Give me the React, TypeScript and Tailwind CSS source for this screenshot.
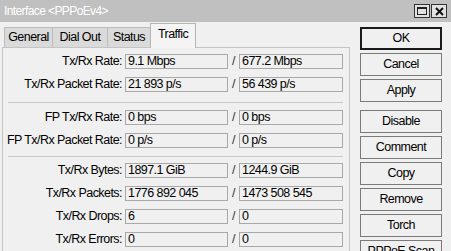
import React from 'react';

const font = { fontFamily: '"Liberation Sans", Arial, sans-serif' };

type Row = { label: string; tx: string; rx: string };

const groups: Row[][] = [
  [
    { label: 'Tx/Rx Rate:', tx: '9.1 Mbps', rx: '677.2 Mbps' },
    { label: 'Tx/Rx Packet Rate:', tx: '21 893 p/s', rx: '56 439 p/s' },
  ],
  [
    { label: 'FP Tx/Rx Rate:', tx: '0 bps', rx: '0 bps' },
    { label: 'FP Tx/Rx Packet Rate:', tx: '0 p/s', rx: '0 p/s' },
  ],
  [
    { label: 'Tx/Rx Bytes:', tx: '1897.1 GiB', rx: '1244.9 GiB' },
    { label: 'Tx/Rx Packets:', tx: '1776 892 045', rx: '1473 508 545' },
    { label: 'Tx/Rx Drops:', tx: '6', rx: '0' },
    { label: 'Tx/Rx Errors:', tx: '0', rx: '0' },
  ],
];

const tabs = [
  { name: 'General', w: 'w-[49px]' },
  { name: 'Dial Out', w: 'w-[56px]' },
  { name: 'Status', w: 'w-[44px]' },
];

function Field({ value, width }: { value: string; width: string }) {
  return (
    <div className={`${width} h-[15px] border border-[#a8a8a8] bg-[#f0f0f0] pl-[2px] flex items-center text-black leading-none`}>
      {value}
    </div>
  );
}

function StatRow({ row }: { row: Row }) {
  return (
    <div className="flex items-center h-[15px]">
      <div className="w-[120px] text-right pr-[1px] text-black whitespace-nowrap">{row.label}</div>
      <div className="w-[2px]" />
      <Field value={row.tx} width="w-[103px]" />
      <div className="w-[11px] text-center text-[#333]">/</div>
      <Field value={row.rx} width="w-[104px]" />
    </div>
  );
}

function Btn({ label, primary, className = '' }: { label: string; primary?: boolean; className?: string }) {
  return (
    <div
      className={`h-[23px] w-[82px] shrink-0 flex items-center justify-center bg-[#f0f0f0] text-black ${
        primary ? 'border-2 border-[#1a1a1a]' : 'border border-[#7a7a7a]'
      } ${className}`}
    >
      {label}
    </div>
  );
}

export default function App() {
  return (
    <div
      className="w-[451px] h-[251px] overflow-hidden bg-[#f0f0f0] text-[12.5px] tracking-[-0.55px] flex flex-col"
      style={font}
    >
      {/* title bar */}
      <div className="h-[22px] shrink-0 bg-[#c0c0c0] flex items-center pl-[4px] pr-[4px]">
        <span className="text-white flex-1 text-[12px] tracking-[-0.6px]">Interface &lt;PPPoEv4&gt;</span>
        <div className="flex gap-px">
          <div className="w-[16px] h-[14px] border border-[#333] bg-[#e2e2e2] flex items-center justify-center">
            <div className="w-[10px] h-[8px] border border-[#222] border-t-2" />
          </div>
          <div className="w-[16px] h-[14px] border border-[#333] bg-[#e2e2e2] flex items-center justify-center">
            <svg width="9" height="9" viewBox="0 0 9 9">
              <path d="M1 1 L8 8 M8 1 L1 8" stroke="#111" strokeWidth="2" />
            </svg>
          </div>
        </div>
      </div>

      <div className="flex flex-1 min-h-0">
        {/* left: tabs + page */}
        <div className="ml-[2px] w-[348px] flex flex-col">
          <div className="h-[24px] mt-[1px] shrink-0 flex items-end pl-[2px]">
            {tabs.map((t) => (
              <div
                key={t.name}
                className={`${t.w} h-[20px] -mr-px border border-b-0 border-[#bcbcbc] bg-[#dadada] flex items-center justify-center text-black`}
              >
                {t.name}
              </div>
            ))}
            <div className="relative z-10 w-[46px] h-[25px] -mb-px border border-b-0 border-[#b4b4b4] bg-[#f4f4f4] flex items-center justify-center text-black pb-[3px]">
              Traffic
            </div>
          </div>
          <div className="flex-1 border border-b-0 border-[#c4c4c4] pt-[6px] pl-0 pr-[6px]">
            {groups.map((g, gi) => (
              <div key={gi}>
                {gi === 1 && <div className="ml-[5px] h-px bg-[#c8c8c8] mt-[10px] mb-[7px]" />}
                {gi === 2 && <div className="ml-[5px] h-px bg-[#c8c8c8] mt-[8px] mb-[6px]" />}
                <div className="flex flex-col gap-[8px]">
                  {g.map((r) => (
                    <StatRow key={r.label} row={r} />
                  ))}
                </div>
              </div>
            ))}
          </div>
        </div>

        {/* right: buttons */}
        <div className="ml-[10px] pt-[5px] flex flex-col gap-[3px]">
          <Btn label="OK" primary />
          <Btn label="Cancel" />
          <Btn label="Apply" />
          <Btn label="Disable" className="mt-[5px]" />
          <Btn label="Comment" />
          <Btn label="Copy" />
          <Btn label="Remove" />
          <Btn label="Torch" />
          <Btn label="PPPoE Scan" />
        </div>
      </div>
    </div>
  );
}
